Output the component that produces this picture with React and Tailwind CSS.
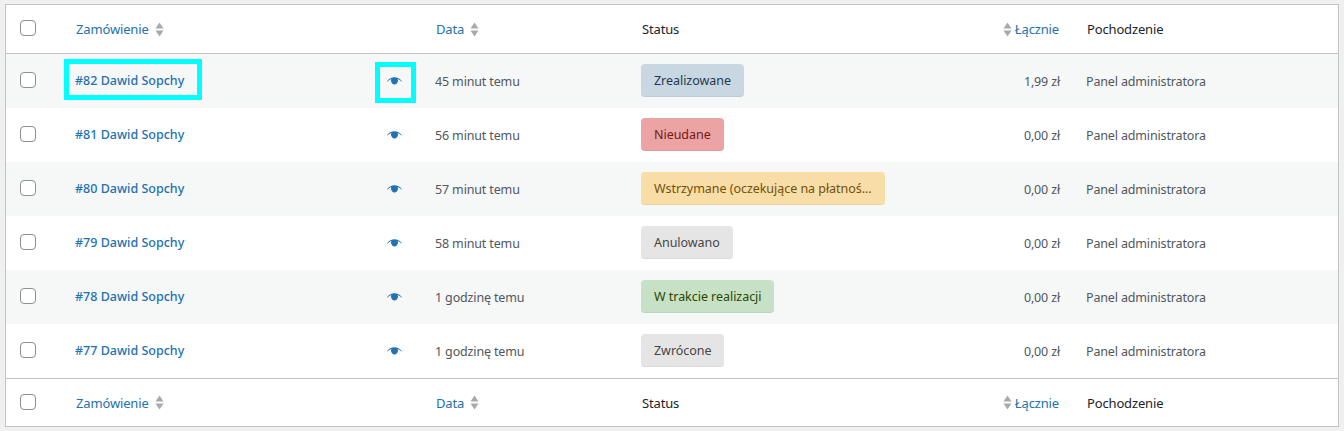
const orders = [
  { id: 82, date: '45 minut temu', status: 'Zrealizowane', badge: 'bg-[#c8d7e1] text-[#1f3a50]', total: '1,99 zł', marked: true },
  { id: 81, date: '56 minut temu', status: 'Nieudane', badge: 'bg-[#eba3a3] text-[#761919]', total: '0,00 zł' },
  { id: 80, date: '57 minut temu', status: 'Wstrzymane (oczekujące na płatnoś…', badge: 'bg-[#f8dda7] text-[#73500a]', total: '0,00 zł' },
  { id: 79, date: '58 minut temu', status: 'Anulowano', badge: 'bg-[#e5e5e5] text-[#454545]', total: '0,00 zł' },
  { id: 78, date: '1 godzinę temu', status: 'W trakcie realizacji', badge: 'bg-[#c6e1c6] text-[#2c4700]', total: '0,00 zł' },
  { id: 77, date: '1 godzinę temu', status: 'Zwrócone', badge: 'bg-[#e5e5e5] text-[#454545]', total: '0,00 zł' },
];

const gridCols = 'grid grid-cols-[58px_311px_50px_206px_359px_81px_1fr] items-center';

function Checkbox({ className = '-mt-0.5' }) {
  return <span className={`block w-4 h-4 bg-white border border-[#8c8f94] rounded-[4px] ml-[14px] ${className}`} />;
}

function SortIcon() {
  return (
    <svg width="9" height="15" viewBox="0 0 9 15" className="shrink-0" fill="#a7aaad">
      <path d="M4.5 0.5 8.5 6.5H0.5Z" />
      <path d="M0.5 8.5H8.5L4.5 14.5Z" />
    </svg>
  );
}

function EyeIcon() {
  return (
    <svg width="15" height="8" viewBox="0 0 15 8" fill="#2271b1">
      <path d="M0 4.2C2 1.6 4.7 0.3 7.5 0.3S13 1.6 15 4.2L14.4 4.6C13 3.2 11.8 2.5 10.6 2.1 10.9 2.6 11 3.1 11 3.6 11 5.7 9.4 7.6 7.5 7.6S4 5.7 4 3.6C4 3.1 4.1 2.6 4.4 2.1 3.2 2.5 2 3.2 0.6 4.6Z" />
    </svg>
  );
}

function HeaderRow({ className, checkbox }) {
  return (
    <div className={`${gridCols} text-[13px] tracking-[-0.15px] ${className}`}>
      <Checkbox className={checkbox} />
      <a className="flex items-center gap-[6px] pl-3 text-[#2271b1]">Zamówienie <SortIcon /></a>
      <span />
      <a className="flex items-center gap-[6px] pl-[11px] text-[#2271b1]">Data <SortIcon /></a>
      <span className="pl-[11px] text-[#1d2327]">Status</span>
      <a className="flex items-center justify-end gap-[3px] pr-[12px] text-[#2271b1]"><SortIcon /> Łącznie</a>
      <span className="pl-4 text-[#1d2327]">Pochodzenie</span>
    </div>
  );
}

function OrderRow({ order, striped }) {
  return (
    <div className={`${gridCols} h-[54px] ${striped ? 'bg-[#f6f7f7]' : 'bg-white'}`}>
      <Checkbox />
      <div className="pl-[11px]">
        <a className="relative inline-block font-medium tracking-normal text-[#2271b1]">
          #{order.id} Dawid Sopchy
          {order.marked && <span className="absolute -left-[11px] -right-[18px] -top-[13px] -bottom-[10px] border-[5px] border-[#00ffff]" />}
        </a>
      </div>
      <div className="flex justify-center pr-[11px]">
        <span className="relative flex">
          <EyeIcon />
          {order.marked && <span className="absolute -left-[12px] -right-[14px] -top-[15px] -bottom-[18px] border-[5px] border-[#00ffff]" />}
        </span>
      </div>
      <span className="pl-[10px] pt-0.5 text-[#50575e]">{order.date}</span>
      <div className="pl-[10px] flex">
        <span className={`block h-[33px] -mt-px leading-[34px] px-[13px] rounded-[4px] border-b border-black/5 tracking-[-0.04px] whitespace-nowrap ${order.badge}`}>
          {order.status}
        </span>
      </div>
      <span className="pr-[11px] pt-0.5 text-right text-[#50575e]">{order.total}</span>
      <span className="pl-[15px] pt-0.5 text-[#50575e]">Panel administratora</span>
    </div>
  );
}

export default function App() {
  return (
    <div className="min-h-[431px] bg-[#f0f0f1] pt-1 px-[5px] font-['Noto_Sans',sans-serif] text-[12.5px] tracking-[-0.15px] leading-[18px]">
      <div className="bg-white border border-[#c3c4c7]">
        <HeaderRow className="border-b border-[#c3c4c7] h-[49px]" />
        {orders.map((order, i) => (
          <OrderRow key={order.id} order={order} striped={i % 2 === 0} />
        ))}
        <HeaderRow className="border-t border-[#c3c4c7] h-12" checkbox="-mt-px" />
      </div>
    </div>
  );
}
